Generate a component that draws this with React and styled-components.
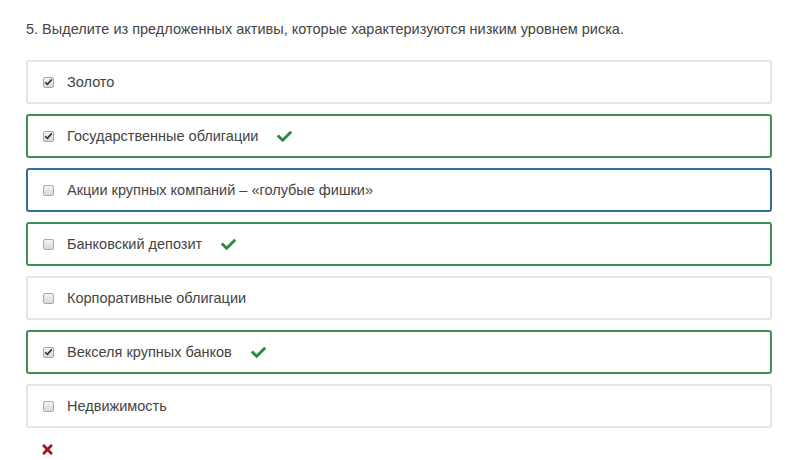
import React from "react"
import styled, { createGlobalStyle } from "styled-components"
import { FaCheck, FaTimes } from "react-icons/fa"

const GlobalStyle = createGlobalStyle`
  body {
    margin: 0;
    background: #fff;
    font-family: "Liberation Sans", Arial, sans-serif;
  }
`;

const colors = {
  text: "#444",
  neutral: "#e4e4e4",
  correct: "#3d8f52",
  selected: "#2f6f9c",
  check: "#2d8a45",
  wrong: "#a3151b",
};

const Page = styled.div`
  width: 800px;
  height: 460px;
  padding: 19px 28px 0 26px;
  box-sizing: border-box;
  overflow: hidden;
`;

const Question = styled.div`
  font-size: 14.5px;
  line-height: 20px;
  color: ${colors.text};
  margin-bottom: 21px;
`;

const Options = styled.div`
  display: flex;
  flex-direction: column;
  gap: 10px;
`;

const Option = styled.label`
  display: flex;
  align-items: center;
  height: 44px;
  box-sizing: border-box;
  padding: 0 15px;
  border: 2px solid ${(p) => colors[p.$state] || colors.neutral};
  border-radius: 3px;
  font-size: 14.5px;
  color: ${colors.text};
`;

const Box = styled.span`
  display: inline-flex;
  align-items: center;
  justify-content: center;
  width: 11px;
  height: 11px;
  box-sizing: border-box;
  border: 1px solid #a9a9a9;
  border-radius: 2px;
  background: linear-gradient(#f4f4f4, #d8d8d8);
  margin-right: 13px;
`;

const Label = styled.span`
  line-height: 20px;
`;

const Mark = styled.span`
  display: inline-flex;
  margin-left: 19px;
  color: ${colors.check};
  font-size: 15px;
`;

const Result = styled.div`
  display: flex;
  padding: 14px 0 0 14px;
  color: ${colors.wrong};
  font-size: 15px;
`;

const Tick = () => (
  <svg width="9" height="8" viewBox="0 0 9 8">
    <path d="M1.2 4.2 L3.4 6.4 L7.8 1.4" fill="none" stroke="#333" strokeWidth="1.6" />
  </svg>
);

const options = [
  { text: "Золото", checked: true },
  { text: "Государственные облигации", checked: true, state: "correct", mark: true },
  { text: "Акции крупных компаний – «голубые фишки»", state: "selected" },
  { text: "Банковский депозит", state: "correct", mark: true },
  { text: "Корпоративные облигации" },
  { text: "Векселя крупных банков", checked: true, state: "correct", mark: true },
  { text: "Недвижимость" },
];

const App = () => (
  <Page>
    <GlobalStyle />
    <Question>5. Выделите из предложенных активы, которые характеризуются низким уровнем риска.</Question>
    <Options>
      {options.map((o) => (
        <Option key={o.text} $state={o.state}>
          <Box>{o.checked && <Tick />}</Box>
          <Label>{o.text}</Label>
          {o.mark && (
            <Mark>
              <FaCheck />
            </Mark>
          )}
        </Option>
      ))}
    </Options>
    <Result>
      <FaTimes />
    </Result>
  </Page>
)

export default App
